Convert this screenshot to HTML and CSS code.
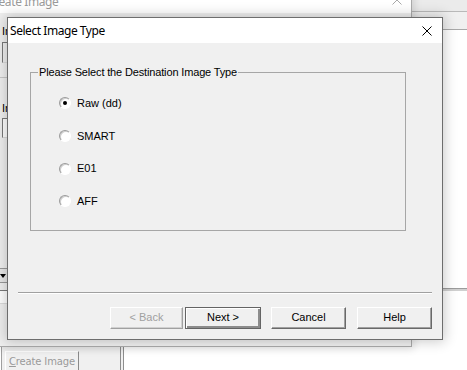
FILE: index.html
```html
<!DOCTYPE html>
<html>
<head>
<meta charset="utf-8">
<title>Select Image Type</title>
<link rel="stylesheet" href="styles.css">
</head>
<body>
<div class="desk">
  <div class="strip-right">
    <div class="sr-top"></div>
    <div class="sr-mid"></div>
    <div class="sr-white"></div>
  </div>
  <div class="hline-right"></div>
  <div class="bottom-app">
    <div class="app-left"><div class="create-btn"><u>C</u>reate Image</div></div>
    <div class="app-split"></div>
    <div class="app-right"></div>
  </div>

  <div class="bgwin">
    <div class="bg-title">
      <span class="bg-title-text">Create Image</span>
      <svg class="bg-close" width="10" height="10" viewBox="0 0 10 10"><path d="M0.5 0.5 L9.5 9.5 M9.5 0.5 L0.5 9.5" stroke="#a8a8a8" stroke-width="1" fill="none"/></svg>
    </div>
    <div class="bg-body">
      <div class="bg-label l1">In</div>
      <div class="bg-field f1"></div>
      <div class="bg-rule"></div>
      <div class="bg-label l2">In</div>
      <div class="bg-field f2"></div>
      <div class="bg-combo"><span class="bg-arrow"></span></div>
      <div class="bg-field f3"></div>
    </div>
  </div>

  <div class="dialog">
    <div class="dlg-title">
      <span class="dlg-title-text">Select Image Type</span>
      <svg class="dlg-close" width="10" height="10" viewBox="0 0 10 10"><path d="M0.5 0.5 L9.5 9.5 M9.5 0.5 L0.5 9.5" stroke="#000" stroke-width="1" fill="none"/></svg>
    </div>
    <div class="dlg-body">
      <div class="group">
        <span class="legend">Please Select the Destination Image Type</span>
        <div class="radios">
          <div class="radio-row"><span class="radio checked"></span><span class="radio-label">Raw (dd)</span></div>
          <div class="radio-row"><span class="radio"></span><span class="radio-label">SMART</span></div>
          <div class="radio-row"><span class="radio"></span><span class="radio-label">E01</span></div>
          <div class="radio-row"><span class="radio"></span><span class="radio-label">AFF</span></div>
        </div>
      </div>
      <div class="separator"></div>
      <div class="buttons">
        <div class="btn back disabled">&lt; Back</div>
        <div class="btn next default">Next &gt;</div>
        <div class="btn cancel">Cancel</div>
        <div class="btn help">Help</div>
      </div>
    </div>
  </div>
</div>
</body>
</html>
```

FILE: styles.css
```css
html, body {
  margin: 0;
  padding: 0;
  width: 467px;
  height: 370px;
  overflow: hidden;
  background: #ffffff;
}

.desk {
  position: relative;
  width: 467px;
  height: 370px;
  overflow: hidden;
  font-family: "Liberation Sans", Arial, sans-serif;
  font-size: 11px;
  color: #000;
}

/* ---- right-hand strip behind windows ---- */
.strip-right {
  position: absolute;
  left: 412px;
  top: 0;
  width: 55px;
  height: 370px;
  display: flex;
  flex-direction: column;
}
.sr-top {
  height: 11px;
  background: #ebebeb;
  border-bottom: 1px solid #b9b9b9;
}
.sr-mid {
  height: 17px;
  background: #f0f0f0;
  border-bottom: 1px solid #a9a9a9;
  box-shadow: 0 1px 0 #d4d4d4;
}
.sr-white {
  flex: 1;
  background: #ffffff;
}
.hline-right {
  position: absolute;
  left: 412px;
  top: 288px;
  width: 55px;
  height: 1px;
  background: #9c9c9c;
  border-bottom: 2px solid #d0d0d0;
}

/* ---- bottom application strip ---- */
.bottom-app {
  position: absolute;
  left: 0;
  top: 347px;
  width: 467px;
  height: 23px;
  display: flex;
}
.app-left {
  width: 119px;
  background: #f0f0f0;
  border-left: 1px solid #a0a0a0;
  margin-left: 1px;
  padding: 4px 0 0 3px;
  box-sizing: border-box;
}
.create-btn {
  width: 74px;
  height: 22px;
  box-sizing: border-box;
  border: 1px solid;
  border-color: #ffffff #8a8a8a #8a8a8a #ffffff;
  color: #9a9a9a;
  font-family: "DejaVu Sans", sans-serif;
  font-size: 10px;
  letter-spacing: -0.15px;
  line-height: 19px;
  padding-left: 3px;
  white-space: nowrap;
  overflow: hidden;
  background: #f0f0f0;
}
.app-split {
  width: 2px;
  background: #f0f0f0;
  border-left: 1px solid #8e8e8e;
  border-right: 1px solid #8e8e8e;
}
.app-right {
  flex: 1;
  background: #ffffff;
}

/* ---- background (inactive) window ---- */
.bgwin {
  position: absolute;
  left: -2px;
  top: -14px;
  width: 414px;
  height: 361px;
  box-sizing: border-box;
  border: 1px solid #aaaaaa;
  background: #f0f0f0;
  display: flex;
  flex-direction: column;
  box-shadow: 2px 2px 8px rgba(0, 0, 0, 0.12);
}
.bg-title {
  height: 26px;
  background: #ffffff;
  display: flex;
  align-items: center;
  justify-content: space-between;
  padding: 0 9px 0 0;
  flex: none;
}
.bg-title-text {
  font-family: "Noto Sans", sans-serif;
  font-size: 12px;
  letter-spacing: -0.4px;
  color: #9a9a9a;
  margin-left: -12px;
  margin-top: 2px;
}
.bg-body {
  flex: 1;
  position: relative;
  padding-left: 3px;
  display: flex;
  flex-direction: column;
  align-items: flex-start;
}
.bg-label {
  font-size: 11px;
  line-height: 13px;
}
.bg-label.l1 { margin-top: 12px; }
.bg-field {
  width: 60px;
  height: 19px;
  background: #f0f0f0;
  border: 1px solid;
  border-color: #7a7a7a #dcdcdc #dcdcdc #7a7a7a;
}
.bg-field.f1 { margin-top: 4px; }
.bg-rule {
  width: 20px;
  height: 1px;
  background: #c8c8c8;
  margin: 14px 0 0 -3px;
}
.bg-label.l2 { margin-top: 24px; }
.bg-field.f2 { margin-top: 3px; height: 18px; background: #fff; }
.bg-combo {
  margin-top: 130px;
  margin-left: -8px;
  width: 12px;
  height: 13px;
  border: 1px solid #9a9a9a;
  background: #e8e8e8;
  display: flex;
  align-items: center;
  justify-content: flex-end;
}
.bg-arrow {
  width: 0;
  height: 0;
  border-left: 3px solid transparent;
  border-right: 3px solid transparent;
  border-top: 4px solid #000;
  margin-right: 1px;
}
.bg-field.f3 {
  margin-top: 7px;
  margin-left: -8px;
  height: 12px;
  background: #fff;
}

/* ---- main dialog ---- */
.dialog {
  position: absolute;
  left: 7px;
  top: 17px;
  width: 436px;
  height: 323px;
  box-sizing: border-box;
  border: 1px solid #6d6d6d;
  background: #f0f0f0;
  display: flex;
  flex-direction: column;
  box-shadow: 0 0 12px 2px rgba(0, 0, 0, 0.2);
}
.dlg-title {
  height: 25px;
  flex: none;
  background: #ffffff;
  display: flex;
  align-items: center;
  justify-content: space-between;
  padding: 0 10px 0 2px;
}
.dlg-title-text {
  font-family: "Noto Sans", sans-serif;
  font-size: 12px;
  letter-spacing: -0.45px;
  color: #000;
}
.dlg-close {
  display: block;
}
.dlg-body {
  flex: 1;
  padding: 29px 10px 0 22px;
  display: flex;
  flex-direction: column;
}

.group {
  position: relative;
  width: 376px;
  height: 159px;
  box-sizing: border-box;
  border: 1px solid #a6a6a6;
}
.legend {
  position: absolute;
  left: 7px;
  top: -7px;
  padding: 0 1px;
  background: #f0f0f0;
  line-height: 13px;
  letter-spacing: -0.15px;
  white-space: nowrap;
}
.radios {
  padding-top: 14px;
  padding-left: 28px;
  display: flex;
  flex-direction: column;
}
.radio-row {
  height: 32.7px;
  display: flex;
  align-items: center;
}
.radio {
  width: 12px;
  height: 12px;
  box-sizing: border-box;
  border-radius: 50%;
  border: 1px solid;
  border-color: #9a9a9a #ffffff #ffffff #9a9a9a;
  background: #ffffff;
  box-shadow: inset 1px 1px 0 #cfcfcf;
  position: relative;
  flex: none;
}
.radio.checked::after {
  content: "";
  position: absolute;
  left: 3px;
  top: 3px;
  width: 4px;
  height: 4px;
  border-radius: 50%;
  background: #000;
}
.radio-label {
  margin-left: 6px;
  line-height: 13px;
}

.separator {
  margin: 61px 0 0 -12px;
  height: 1px;
  background: #a0a0a0;
  border-bottom: 1px solid #ffffff;
}

.buttons {
  margin-top: 13px;
  display: flex;
  justify-content: flex-end;
}
.btn {
  height: 22px;
  width: 75px;
  box-sizing: border-box;
  border: 1px solid;
  border-color: #ffffff #696969 #696969 #ffffff;
  box-shadow: inset -1px -1px 0 #a0a0a0;
  background: #f0f0f0;
  text-align: center;
  line-height: 19px;
  font-size: 11px;
}
.btn.back {
  width: 73px;
  border-color: #ffffff #a0a0a0 #a0a0a0 #ffffff;
  box-shadow: inset -1px -1px 0 #d0d0d0;
}
.btn.disabled {
  color: #a0a0a0;
}
.btn.default {
  width: 76px;
  margin-left: 2px;
  border: 1px solid #646464;
  box-shadow: inset 1px 1px 0 #ffffff, inset -2px -2px 0 #8c8c8c;
}
.btn.cancel {
  margin-left: 10px;
}
.btn.help {
  margin-left: 11px;
}
```
